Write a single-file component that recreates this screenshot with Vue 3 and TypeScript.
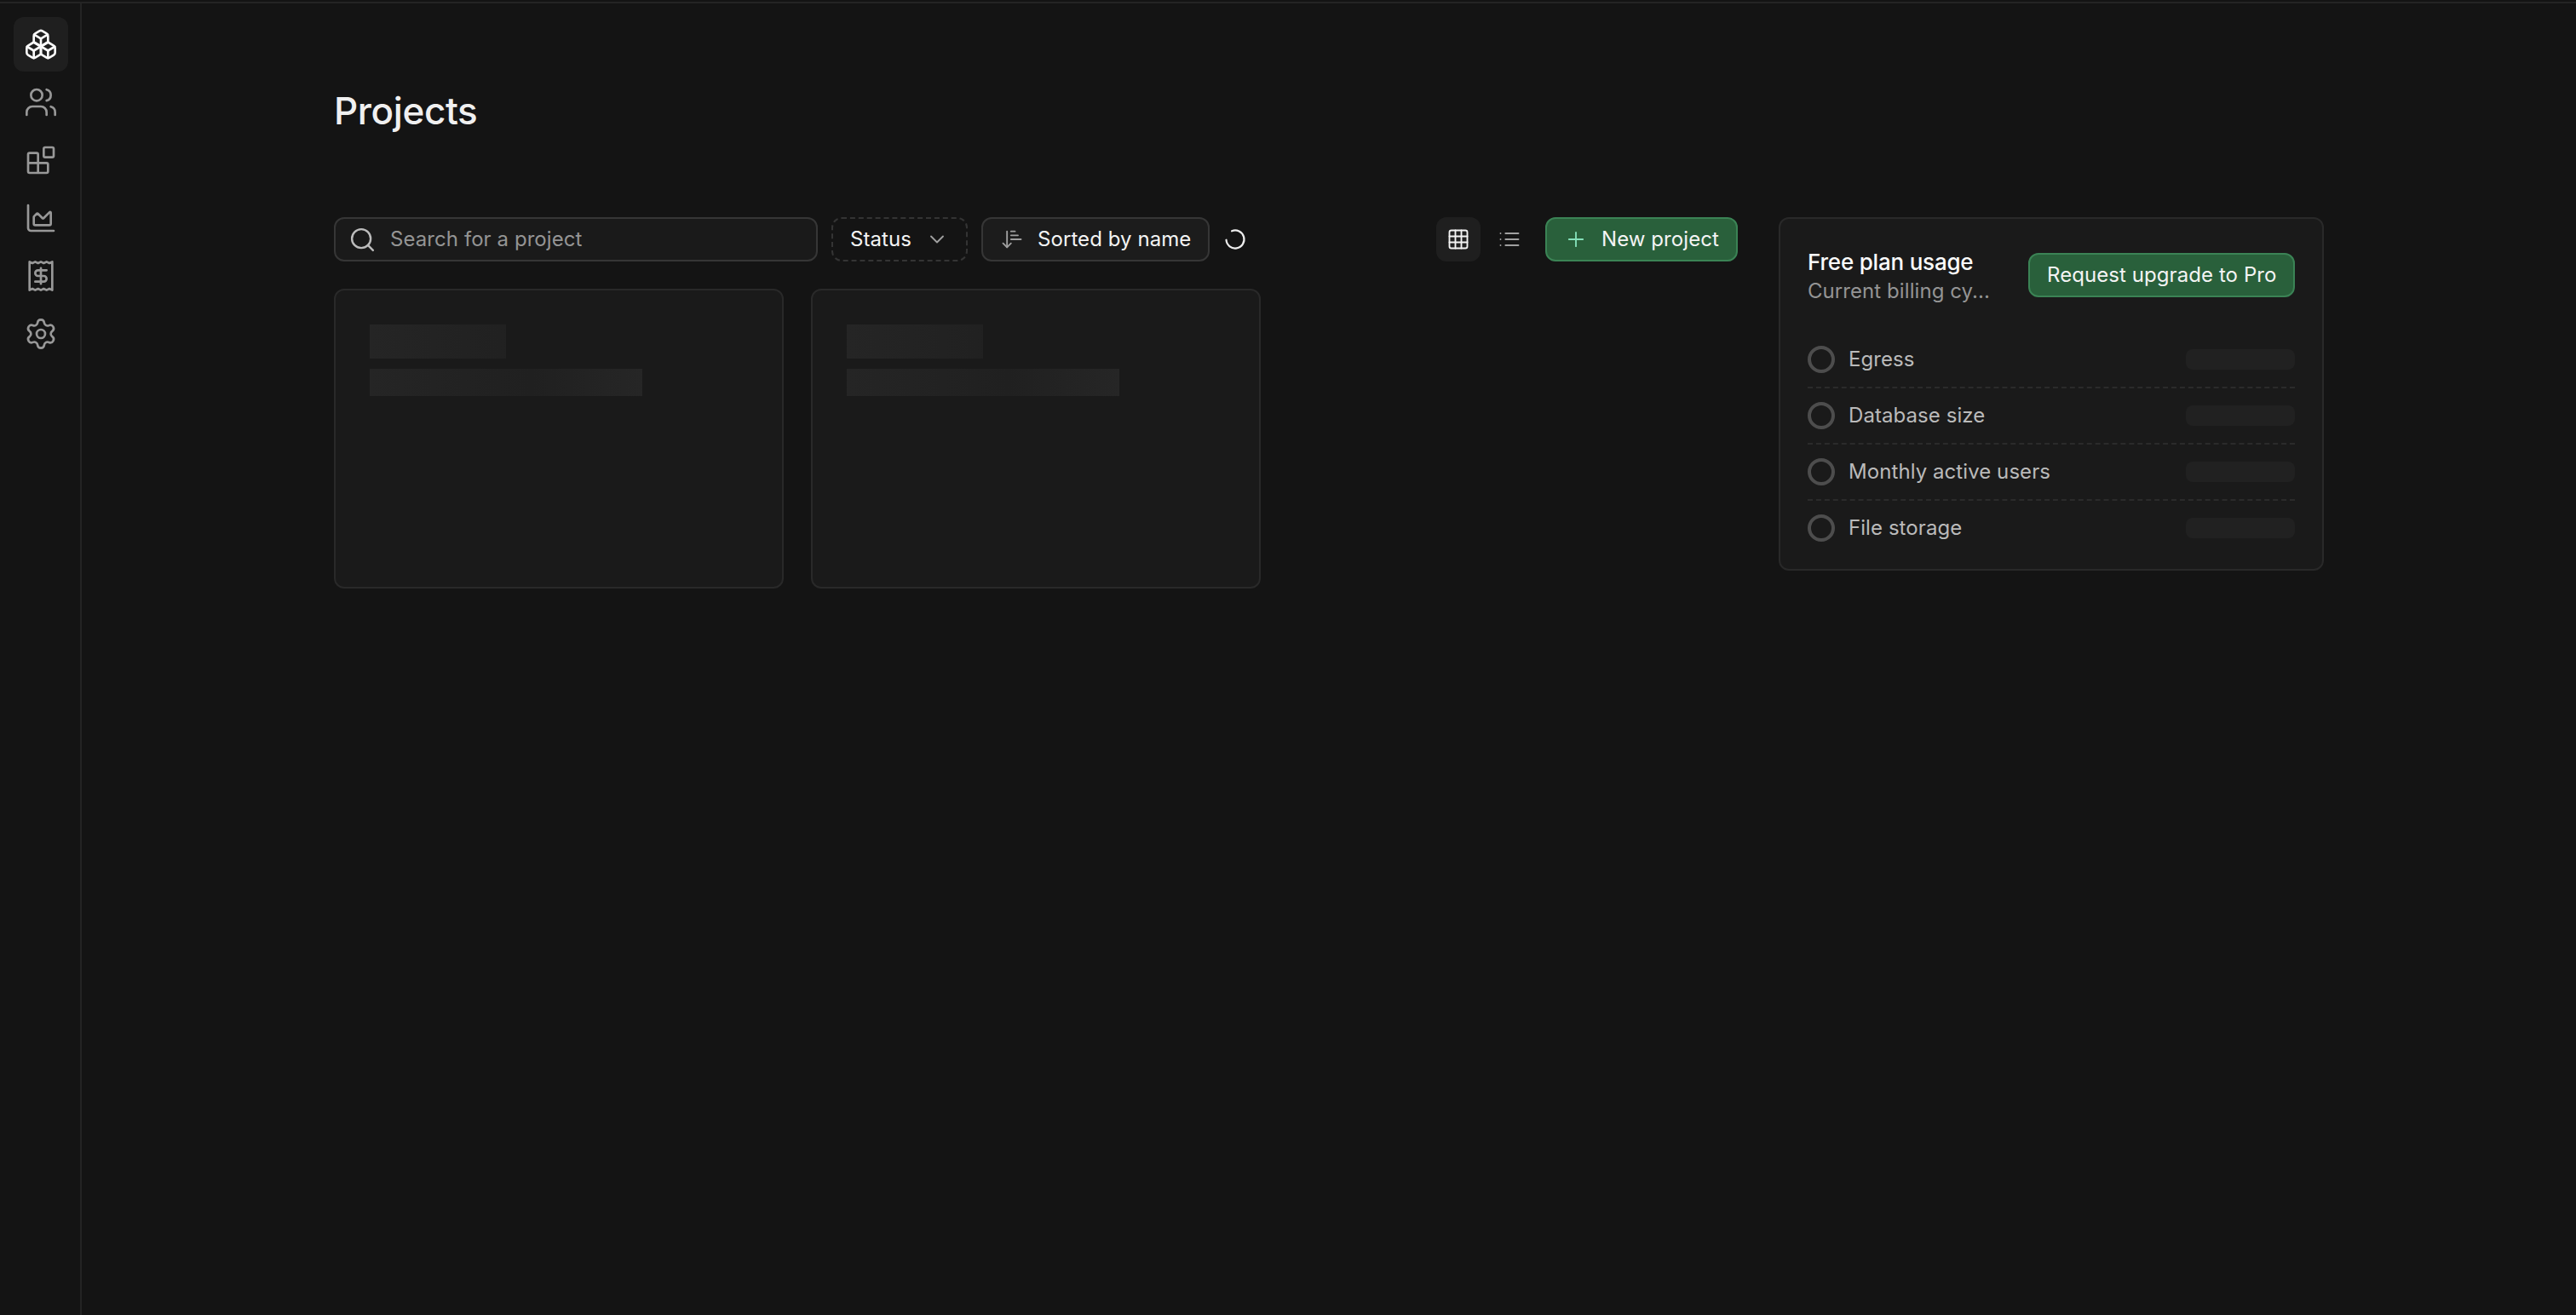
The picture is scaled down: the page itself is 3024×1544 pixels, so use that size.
<script setup lang="ts">
interface NavItem {
  name: string
  active?: boolean
  paths: string[]
}

const nav: NavItem[] = [
  {
    name: 'projects',
    active: true,
    paths: [
      'M2.97 12.92A2 2 0 0 0 2 14.63v3.24a2 2 0 0 0 .97 1.71l3 1.8a2 2 0 0 0 2.06 0L12 19v-5.5l-5-3-4.03 2.42Z',
      'm7 16.5-4.74-2.85',
      'm7 16.5 5-3',
      'M7 16.5v5.17',
      'M12 13.5V19l3.97 2.38a2 2 0 0 0 2.06 0l3-1.8a2 2 0 0 0 .97-1.71v-3.24a2 2 0 0 0-.97-1.71L17 10.5l-5 3Z',
      'm17 16.5-5-3',
      'm17 16.5 4.74-2.85',
      'M17 16.5v5.17',
      'M7.97 4.42A2 2 0 0 0 7 6.13v4.37l5 3 5-3V6.13a2 2 0 0 0-.97-1.71l-3-1.8a2 2 0 0 0-2.06 0l-3 1.8Z',
      'M12 8 7.26 5.15',
      'm12 8 4.74-2.85',
      'M12 13.5V8',
    ],
  },
  {
    name: 'team',
    paths: [
      'M16 21v-2a4 4 0 0 0-4-4H6a4 4 0 0 0-4 4v2',
      'M16 3.128a4 4 0 0 1 0 7.744',
      'M22 21v-2a4 4 0 0 0-3-3.87',
      'M9 3a4 4 0 1 0 0 8a4 4 0 1 0 0-8Z',
    ],
  },
  {
    name: 'integrations',
    paths: [
      'M10 21V8a1 1 0 0 0-1-1H4a1 1 0 0 0-1 1v12a1 1 0 0 0 1 1h12a1 1 0 0 0 1-1v-5a1 1 0 0 0-1-1H3',
      'M15 3h5a1 1 0 0 1 1 1v5a1 1 0 0 1-1 1h-5a1 1 0 0 1-1-1V4a1 1 0 0 1 1-1Z',
    ],
  },
  {
    name: 'usage',
    paths: [
      'M3 3v16a2 2 0 0 0 2 2h16',
      'M7 11.207a.5.5 0 0 1 .146-.353l2-2a.5.5 0 0 1 .708 0l3.292 3.292a.5.5 0 0 0 .708 0l4.292-4.292a.5.5 0 0 1 .854.353V16a1 1 0 0 1-1 1H8a1 1 0 0 1-1-1z',
    ],
  },
  {
    name: 'billing',
    paths: [
      'M4 2v20l2-1 2 1 2-1 2 1 2-1 2 1 2-1 2 1V2l-2 1-2-1-2 1-2-1-2 1-2-1-2 1Z',
      'M16 8h-6a2 2 0 1 0 0 4h4a2 2 0 1 1 0 4H8',
      'M12 17.5v-11',
    ],
  },
  {
    name: 'settings',
    paths: [
      'M9.671 4.136a2.34 2.34 0 0 1 4.659 0 2.34 2.34 0 0 0 3.319 1.915 2.34 2.34 0 0 1 2.33 4.033 2.34 2.34 0 0 0 0 3.831 2.34 2.34 0 0 1-2.33 4.033 2.34 2.34 0 0 0-3.319 1.915 2.34 2.34 0 0 1-4.659 0 2.34 2.34 0 0 0-3.32-1.915 2.34 2.34 0 0 1-2.33-4.033 2.34 2.34 0 0 0 0-3.831A2.34 2.34 0 0 1 6.35 6.051a2.34 2.34 0 0 0 3.319-1.915',
      'M12 9a3 3 0 1 0 0 6a3 3 0 1 0 0-6Z',
    ],
  },
]

const metrics: string[] = ['Egress', 'Database size', 'Monthly active users', 'File storage']
</script>

<template>
  <div class="shell">
    <div class="topline"></div>
    <div class="body">
      <nav class="sidebar">
        <a v-for="item in nav" :key="item.name" class="nav-item" :class="{ active: item.active }">
          <svg class="icon nav-icon" viewBox="0 0 24 24">
            <path v-for="(d, i) in item.paths" :key="i" :d="d" />
          </svg>
        </a>
      </nav>

      <main class="page">
        <h1>Projects</h1>
        <div class="columns">
          <section class="projects">
            <div class="toolbar">
              <div class="search">
                <svg class="icon search-icon" viewBox="0 0 24 24">
                  <path d="m21 21-4.34-4.34" />
                  <circle cx="11" cy="11" r="8" />
                </svg>
                <span>Search for a project</span>
              </div>
              <button class="btn dashed">
                <span>Status</span>
                <svg class="icon sm" viewBox="0 0 24 24"><path d="m6 9 6 6 6-6" /></svg>
              </button>
              <button class="btn sort">
                <svg class="icon sm" viewBox="0 0 24 24">
                  <path d="m3 16 4 4 4-4" />
                  <path d="M7 20V4" />
                  <path d="M11 4h4" />
                  <path d="M11 8h7" />
                  <path d="M11 12h10" />
                </svg>
                <span>Sorted by name</span>
              </button>
              <svg class="icon spinner" viewBox="0 0 24 24">
                <path d="M21 12a9 9 0 1 1-6.219-8.56" transform="rotate(-112 12 12)" />
              </svg>
              <div class="views">
                <div class="view on">
                  <svg class="icon sm" viewBox="0 0 24 24">
                    <rect x="3" y="3" width="18" height="18" rx="2" />
                    <path d="M3 9h18M3 15h18M9 3v18M15 3v18" />
                  </svg>
                </div>
                <div class="view">
                  <svg class="icon sm" viewBox="0 0 24 24">
                    <path d="M3 6h.01M3 12h.01M3 18h.01M8 6h13M8 12h13M8 18h13" />
                  </svg>
                </div>
              </div>
              <button class="btn primary new">
                <svg class="icon sm" viewBox="0 0 24 24"><path d="M5 12h14M12 5v14" /></svg>
                <span>New project</span>
              </button>
            </div>
            <div class="cards">
              <div v-for="n in 2" :key="n" class="card">
                <div class="shimmer title"></div>
                <div class="shimmer line"></div>
              </div>
            </div>
          </section>

          <aside class="usage">
            <header class="usage-head">
              <div class="usage-text">
                <h2>Free plan usage</h2>
                <p>Current billing cy...</p>
              </div>
              <button class="btn primary upgrade"><span>Request upgrade to Pro</span></button>
            </header>
            <div v-for="m in metrics" :key="m" class="metric">
              <span class="ring"></span>
              <span class="metric-name">{{ m }}</span>
              <span class="placeholder"></span>
            </div>
          </aside>
        </div>
      </main>
    </div>
  </div>
</template>

<style>
body {
  background: #141414;
}
</style>

<style scoped>
* {
  box-sizing: border-box;
}
.shell {
  width: 3024px;
  height: 1544px;
  overflow: hidden;
  display: flex;
  flex-direction: column;
  background: #141414;
  color: #fafafa;
  font-family: Inter, 'Liberation Sans', sans-serif;
  font-size: 24px;
  line-height: 32px;
  letter-spacing: 0.07px;
}
.topline {
  height: 4px;
  border-bottom: 2px solid #242424;
}
.body {
  flex: 1;
  display: flex;
}
.sidebar {
  width: 96px;
  padding: 16px 0 0 16px;
  border-right: 2px solid #242424;
  display: flex;
  flex-direction: column;
  gap: 4px;
}
.nav-item {
  width: 64px;
  height: 64px;
  border-radius: 12px;
  display: flex;
  align-items: center;
  justify-content: center;
  color: #989898;
}
.nav-item.active {
  background: #1f1f1f;
  color: #fafafa;
}
.icon {
  display: block;
  flex: none;
  fill: none;
  stroke: currentColor;
  stroke-width: 1.6;
  stroke-linecap: round;
  stroke-linejoin: round;
}
.nav-icon {
  width: 40px;
  height: 40px;
}
.sm {
  width: 28px;
  height: 28px;
  color: #a0a0a0;
}
.page {
  width: 2336px;
  margin-left: 296px;
  padding-top: 94px;
}
h1 {
  margin: 0 0 93px;
  font-size: 44px;
  line-height: 64px;
  font-weight: 500;
  letter-spacing: -0.4px;
  color: #f0f0f0;
}
.columns {
  display: flex;
  align-items: flex-start;
  gap: 48px;
}
.projects {
  width: 1648px;
}
.toolbar {
  display: flex;
  align-items: center;
  height: 52px;
}
.search {
  width: 568px;
  height: 52px;
  margin-right: 16px;
  padding-left: 15px;
  display: flex;
  align-items: center;
  gap: 16px;
  border: 2px solid #363636;
  border-radius: 12px;
  background: #1a1a1a;
  color: #949494;
}
.search-icon {
  width: 33px;
  height: 33px;
  stroke-width: 1.75;
  color: #bcbcbc;
}
.btn {
  height: 52px;
  padding: 0 20px;
  display: flex;
  align-items: center;
  gap: 16px;
  border: 2px solid #363636;
  border-radius: 12px;
  background: #1c1c1c;
  color: #f4f4f4;
  font: inherit;
  letter-spacing: inherit;
  white-space: nowrap;
}
.dashed {
  width: 160px;
  margin-right: 16px;
  border-style: dashed;
  border-color: #343434;
  background: transparent;
}
.sort {
  width: 268px;
}
.new {
  width: 226px;
}
.upgrade {
  width: 313px;
}
.spinner {
  width: 28px;
  height: 28px;
  margin-left: 16px;
  stroke-width: 1.9;
  color: #ededed;
}
.views {
  display: flex;
  gap: 8px;
  margin: 0 16px 0 auto;
}
.view {
  width: 52px;
  height: 52px;
  border-radius: 12px;
  display: flex;
  align-items: center;
  justify-content: center;
}
.view.on {
  background: #1f1f1f;
}
.view.on .icon {
  color: #f4f4f4;
}
.primary {
  background: #29603b;
  border-color: #3b8355;
}
.primary .icon {
  color: #85e0ba;
}
.cards {
  margin-top: 32px;
  display: grid;
  grid-template-columns: repeat(3, 528px);
  gap: 32px;
}
.card {
  height: 352px;
  padding: 40px;
  border: 2px solid #292929;
  border-radius: 12px;
  background: #1a1a1a;
}
.shimmer {
  background: linear-gradient(to right, #252525 0, #202020 190px, #262626 320px);
}
.shimmer.title {
  width: 160px;
  height: 40px;
  margin-bottom: 12px;
}
.shimmer.line {
  width: 320px;
  height: 32px;
}
.usage {
  width: 640px;
  height: 415px;
  padding: 0 32px;
  border: 2px solid #292929;
  border-radius: 12px;
  background: #1a1a1a;
}
.usage-head {
  height: 133px;
  padding-top: 32px;
  display: flex;
  justify-content: space-between;
  align-items: flex-start;
}
.usage-head .btn {
  margin-top: 8px;
}
h2 {
  margin: 3px 0 0;
  font-size: 26px;
  line-height: 32px;
  font-weight: 500;
  letter-spacing: -0.2px;
  color: #fafafa;
}
p {
  margin: 2px 0 0;
  color: #949494;
}
.metric {
  height: 66px;
  display: flex;
  align-items: center;
  gap: 16px;
  border-bottom: 2px dashed #2b2b2b;
  color: #bababa;
}
.metric:last-child {
  border-bottom-color: transparent;
}
.ring {
  width: 32px;
  height: 32px;
  border: 4px solid #4d4d4d;
  border-radius: 50%;
}
.placeholder {
  width: 128px;
  height: 24px;
  margin-left: auto;
  border-radius: 8px;
  background: #212121;
}
</style>
